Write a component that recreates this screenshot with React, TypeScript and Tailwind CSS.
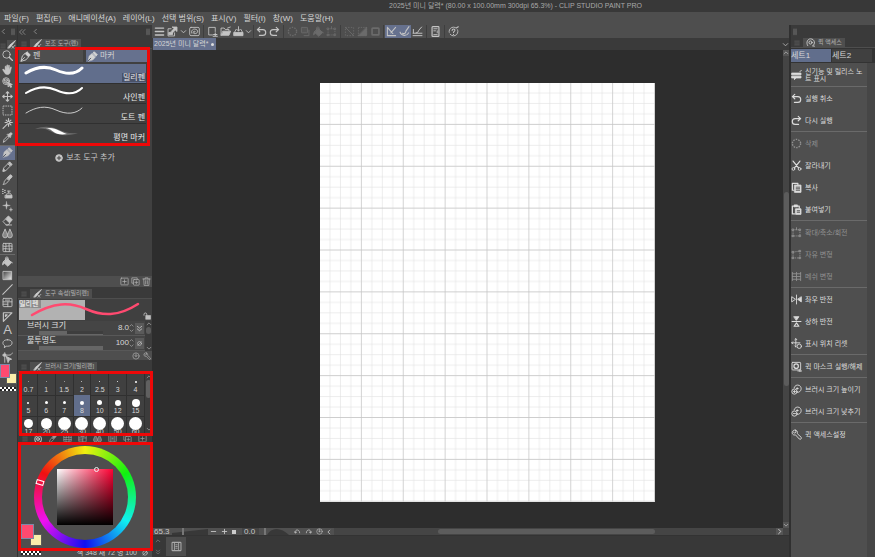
import type { ReactNode } from 'react';
import { useState } from 'react';
import clsx from 'clsx';

interface IconProps {
  children: ReactNode;
  className?: string;
}

const Icon = ({ children, className = 'size-[11px]' }: IconProps) => (
  <svg
    viewBox="0 0 16 16"
    className={clsx('shrink-0', className)}
    fill="none"
    stroke="currentColor"
    strokeWidth="1.3"
    strokeLinecap="round"
    strokeLinejoin="round"
    aria-hidden="true"
  >
    {children}
  </svg>
);

const icons = {
  zoom: <><circle cx="6.5" cy="6.5" r="5.3" /><path d="M10.5 10.5l4.8 4.8" strokeWidth="2" /></>,
  hand: <path fill="currentColor" strokeWidth=".6" d="M4.5 9V4c0-1.500 1.700-1.500 1.800 0L6.800 7V2c0-1.400 1.800-1.400 1.800 0v5l.6-4.500c.2-1.300 1.900-1.100 1.800.2L10.600 8l1.500-3.200c.5-1.200 2-.6 1.600.6L12 12.500C11.200 14.600 10 15.500 8 15.500S4.700 14.500 3.800 13L1 8.800c-.6-1.200.8-1.900 1.700-1z" />,
  operation: <><circle cx="6" cy="6" r="5" /><path d="M6 3l3 1.500v3L6 9 3 7.500v-3zM3 4.500L6 6l3-1.500M6 6v3" /><path fill="currentColor" d="M9 8l6 3-2.500.8 1.500 2.700-1.500.6-1.300-2.600L9.300 14z" /></>,
  move: <path d="M8 1v14M1 8h14M8 1L6 3.200M8 1l2 2.200M8 15l-2-2.200M8 15l2-2.200M1 8l2.200-2M1 8l2.200 2M15 8l-2.200-2M15 8l-2.200 2" strokeWidth="1.500" />,
  marquee: <rect x="1.500" y="1.500" width="13" height="13" strokeLinecap="butt" strokeDasharray="2.200 1.200" />,
  wand: <path d="M1.500 15L8 8.500M9.500 1v4M9.500 8v4M4.500 6.500h3M11 6.500h4M6 3l2 2M13 3l-2 2M13 10l-2-2" strokeWidth="1.700" />,
  pipette: <><path d="M2 14.500l1-3.500 5.500-5.500 2 2L5 13z" /><path fill="currentColor" d="M8 4l4 4 1-1-1-1 2.300-2.500c1-1.300-.8-3.300-2.200-2.200L9.800 3.700 9 3z" /></>,
  pen: <><path d="M1.500 14.500l2-7.500 4-3.500 5 5L9 12.500z" /><path d="M1.500 14.500L6.500 9.500" /><path fill="currentColor" d="M8 3.200L10.200 1 15 5.800 12.800 8z" /></>,
  marker: <><path fill="currentColor" strokeWidth=".8" d="M1.500 14.500l1.700-7.200L7 4l5 5-3.400 3.800z" /><path fill="currentColor" d="M8.500 3L10.500 1 15 5.500 13 7.500z" /><path d="M1.500 14.500l4-4" stroke="#4b5262" /></>,
  pencil: <><path d="M1.500 14.500l1-4.500 6-6 3.500 3.500-6 6z" /><path fill="currentColor" d="M9 3.200L11 1.200 14.800 5 12.800 7z" /><path fill="currentColor" d="M1.500 14.500l.8-3 2.200 2.200z" /></>,
  brush: <><path d="M2 15c1-1 1-3 1.500-4.500L7 6.500l3 3-3.500 4C5 14.800 3.500 14.500 2 15z" /><path fill="currentColor" d="M7.500 5.500L11.500 1.500C13 .5 15.500 3 14.500 4.500l-4 4z" /></>,
  airbrush: <><path fill="currentColor" d="M5 10.500h9.500v4H5z" /><path d="M6.500 10.500c0-2 1-3 2-3h2.500c1.500 0 2.500 1 2.500 3M9.800 7V4.500M8 4.500h4" /><path d="M1 2h.5M1 5h.5M4 3.500h.5M4 6.500h.5M1 8h.5" strokeWidth="1.800" /></>,
  sparkle: <><path fill="currentColor" strokeWidth=".6" d="M6.500 1l.9 4.600L12 6.500l-4.600.9L6.500 12l-.9-4.600L1 6.500l4.600-.9z" /><path fill="currentColor" strokeWidth=".5" d="M13 10l.6 2 2 .6-2 .6-.6 2-.6-2-2-.6 2-.6z" /></>,
  eraser: <><path fill="currentColor" d="M7 3.500L9.500 1.500 15 7l-4 4.500-5.500-5.500z" /><path d="M5 6L1.500 9.500l4.500 5h3l2-2.500M6 14.500h8" /></>,
  blend: <><path fill="currentColor" fillOpacity=".5" d="M4.500 2C2.500 6 1 8.500 1 10.800a3.500 3.500 0 007 0C8 8.500 6.500 6 4.500 2z" /><path fill="currentColor" fillOpacity=".5" d="M11.500 2c-2 4-3.500 6.500-3.500 8.800a3.500 3.500 0 007 0C15 8.500 13.500 6 11.500 2z" /></>,
  mesh: <><rect x="1.500" y="2" width="13" height="12" rx="1" /><path d="M5.500 2c1.500 4-1.500 8 0 12M10.500 2c-1.500 4 1.500 8 0 12M1.500 6c4 1.500 9-1.500 13 0M1.500 10c4-1.500 9 1.500 13 0" /></>,
  bucket: <><path fill="currentColor" d="M7.500 3.500L14 9.500 8.500 15 2 9z" /><path d="M5 8V3c0-2 4-2 4 0v3" /><path fill="currentColor" d="M2.500 8C1 9 .8 11 1 13c1-.5 2-2 2-4M13 8l2.500 2.500" /></>,
  gradient: <><defs><linearGradient id="toolGradient" x1="0" y1="0" x2="1" y2="1"><stop offset="0" stopColor="#444" /><stop offset="1" stopColor="#eee" /></linearGradient></defs><rect x="2" y="2" width="12" height="12" fill="url(#toolGradient)" /></>,
  line: <path d="M1 15L15 1" strokeWidth="1.500" />,
  frame: <><rect x="1.500" y="2" width="13" height="12" rx="1" /><path d="M1.500 7h13M8.500 7v7M1.500 10.500h7M5 4.500h6" /></>,
  ruler: <path d="M2 2.500h12.500L2 15z M5 5.500h2.500L5 8z" strokeWidth="1.700" />,
  balloon: <path d="M8 2.500c4 0 6.700 2 6.700 4.700S12 12 8 12c-1 0-1.500 0-2.200-.3L3.500 14.500l.2-3.600C2 10 1.300 8.800 1.300 7.200 1.300 4.500 4 2.500 8 2.500z" />,
  correct: <><path d="M4 1v14M1 4.500h9c3 0 4-1 5-3" /><path fill="currentColor" d="M6.500 6.500l7.500 4-3.200.8L9 15z" /><rect x="2.500" y="3" width="3" height="3" fill="currentColor" /></>,
  menu: <path d="M2 3h12M2 8h12M2 13h12" strokeWidth="2" />,
  clip: <><path d="M6 4H1.500v10.500H11V10" /><path fill="currentColor" d="M8 1.500h6.500V8l-2.300-2.200L8 10 6 8l4.200-4.200z" /><path fill="currentColor" d="M3 9.500h5v3H3z" /></>,
  spiral: <><rect x="1" y="2" width="14" height="12" rx="2" /><path d="M4 10.500C2.500 8 5 4.500 8 4.500s5 2 4.500 4-3 3-5 2.500-2-3 0-3.300 2 1.300 1 1.500" /></>,
  newFile: <><path d="M8 13H2.500v-11h9.500v6" /><path d="M12 10v5M9.500 12.500h5M9 15h6" strokeWidth="1.500" /></>,
  open: <><path d="M1.500 13.500V3H6l1.500 2h5.500v2" /><path fill="currentColor" d="M4.500 7.500h11l-2.500 6H2z" /><path d="M11 3l4-1.500" /></>,
  save: <><path fill="currentColor" d="M1.500 9.500h13v4.500h-13z" /><path d="M2 9.500L4.500 5M14 9.500L11.500 5M8 1v6M5.800 5L8 7.500 10.200 5" /></>,
  undo: <path d="M5.500 2L2 5.200l3.500 3.200M2 5.200h8c5.500 0 5.500 8.500 0 8.500H5" strokeWidth="1.700" />,
  redo: <path d="M10.500 2L14 5.200l-3.500 3.200M14 5.200H6C.5 5.200.5 13.700 6 13.700h5" strokeWidth="1.700" />,
  dotCircle: <circle cx="8" cy="8" r="6" strokeLinecap="butt" strokeDasharray="2.200 1.570" strokeWidth="2" />,
  copyDim: <><rect x="2" y="2" width="9" height="8" rx="1" fill="currentColor" fillOpacity=".3" /><path d="M13 6v8H6" /></>,
  transform: <><rect x="3" y="4" width="10" height="9" strokeLinecap="butt" strokeDasharray="2 1.200" /><path d="M8 1v3M2 3h2v2H2zM12 3h2v2h-2zM2 12h2v2H2zM12 12h2v2h-2z" /></>,
  deselect: <><rect x="2" y="2" width="12" height="12" strokeLinecap="butt" strokeDasharray="2 2" /><path d="M2 2l12 12" /></>,
  invert: <><rect x="2" y="2" width="12" height="12" strokeLinecap="butt" strokeDasharray="2 1.500" /><path fill="currentColor" d="M14 2v12H2z" /></>,
  border: <rect x="3" y="3" width="10" height="10" rx="1" strokeWidth="2.400" />,
  snapRuler: <path d="M2 2v12h12M2 2l8 9M7 10l7-8" strokeWidth="1.500" />,
  snapCurve: <path d="M1.500 9c2 6 10 6 12.500 1M5 10.500c3 1.500 5-.5 5-3L14.500 1" strokeWidth="1.600" />,
  snapGrid: <path d="M1.500 10.500h13M1.500 14h13M2 5v5M6 10c3 0 3-2 4-4l4-4.500" strokeWidth="1.400" />,
  phone: <><rect x="3" y="1" width="10" height="14" rx="1" strokeWidth="1.700" /><path d="M5.500 4h5M5.500 7H8M5.500 12.500h5M10.500 7v3" /></>,
  help: <><circle cx="8" cy="8" r="6.300" strokeDasharray="15 3" /><path d="M6 6.500c0-3 4.500-2.500 4 0-.3 1.300-2 1.500-2 3M8 12v.2M12.500 2.500L15 1" strokeWidth="1.500" /></>,
  down: <path d="M3 6l5 5 5-5" strokeWidth="2.200" />,
  up: <path d="M3 10l5-5 5 5" strokeWidth="2.200" />,
  left: <path d="M10 3L5 8l5 5" strokeWidth="2.200" />,
  right: <path d="M6 3l5 5-5 5" strokeWidth="2.200" />,
  double: <path d="M8 3L3 8l5 5M14 3L9 8l5 5" strokeWidth="1.800" />,
  doubleDown: <path d="M3 3l5 4 5-4M3 9l5 4 5-4" strokeWidth="1.800" />,
  grip: <path d="M6 2v12M10 2v12" strokeDasharray="1.500 1" />,
  tabBrush: <><path d="M2 14.500c2 0 4-1 5-3L15 1 5 9z" fill="currentColor" /><path d="M9 14.500l5-5M9 11l3 3.500" /></>,
  plusCircle: <><circle cx="8" cy="8" r="6.800" fill="currentColor" /><path d="M8 4.500v7M4.500 8h7" stroke="#404040" strokeWidth="2" /></>,
  addBox: <><rect x="1.500" y="2" width="13" height="12" rx="1" /><path d="M8 5v6M5 8h6" /></>,
  copyBox: <><path d="M4 11H1.500V1.500H11V4" /><rect x="4.500" y="4.500" width="10" height="10" rx="1" /><path d="M9.500 7v5M7 9.500h5" /></>,
  trash: <path d="M1.500 3.500h13M5.500 3.500V1.500h5v2M3 3.500l.8 11.500h8.400L13 3.500M6.500 6.500v6M9.500 6.500v6" />,
  lock: <><rect x="6" y="7" width="9" height="7.500" fill="currentColor" /><path d="M7.500 7V4.500c0-3.500-5.500-3.500-5.500 0V6.500" strokeWidth="1.800" /></>,
  reset: <><circle cx="8" cy="8" r="6.300" /><path d="M8 3.500v5M5.800 6.800L8 9.500l2.200-2.700" /></>,
  wrench: <path d="M6.500 1.500C3 .8.500 4.500 2.500 7.500c1 1.300 2.700 1.500 4 1l5.500 6c2 1.500 4-.8 2.800-2.500l-5.700-5.300c.7-2.700-.3-4.500-2.600-5.200L7.500 4.500 5.500 6 3.500 4.500" />,
  noCircle: <><circle cx="8" cy="8" r="4.500" /><path d="M4 12l8-8" /></>,
  access: <><path d="M3 13.500C-.5 8 3 1.500 8 1.500c8 0 9 10 3.500 12.500L15 14.500" strokeWidth="1.600" /><circle cx="8" cy="8" r="2.800" strokeWidth="1.600" /></>,
  news: <><path fill="currentColor" d="M1.500 4.500h13v2.500h-13zM1.500 9h13v2.500H7L5 14v-2.500H1.500z" /><path d="M13 2l2-1" /></>,
  cut: <><path d="M3 1.500l8 10M13 1.500l-8 10" strokeWidth="1.700" /><circle cx="3.500" cy="13" r="2" /><circle cx="12.500" cy="13" r="2" /></>,
  copy: <><path d="M4 12H2V2h8v2" strokeWidth="1.800" /><path fill="currentColor" d="M5.500 4.500h9v10.500h-9z" /><path d="M7.500 7.500h5M7.500 9.800h5M7.500 12h5" stroke="#4f4f4f" /></>,
  paste: <><path d="M5 14.500H2V3h10v3M5 1.500h4v2.500H5z" strokeWidth="1.800" /><path fill="currentColor" d="M7 7h7.500v8H7z" /><path d="M9 9.800h3.500M9 12h3.500" stroke="#4f4f4f" /></>,
  free: <><path d="M3 4.500L13 3v10H3z" strokeLinecap="butt" strokeDasharray="2 1.200" /><path d="M2 3.500h2v2H2zM12 2h2v2h-2zM2 12h2v2H2zM12 12h2v2h-2z" /></>,
  meshDim: <path d="M2 2v12M14 2v12M2 4h12M2 12h12M8 2v12M2 8h12" />,
  flipH: <><path d="M1 4.500v7L6 8z" /><path fill="currentColor" d="M15 4.500v7L10 8z" /><path d="M8 1.500v13" /></>,
  flipV: <><path fill="currentColor" d="M4.500 1h7L8 6z" /><path d="M4.500 15h7L8 10zM1.500 8h13" strokeWidth="1.600" /></>,
  resetPos: <><path d="M7 1v12M1 7h12M5.500 2.500L7 1l1.500 1.500M2.500 5.500L1 7l1.500 1.500M5.500 11.500L7 13" /><circle cx="12" cy="12" r="3.200" /></>,
  mask: <><rect x="1.500" y="2" width="12.500" height="11" rx="1" /><circle cx="7.500" cy="7.500" r="3.200" strokeWidth="1.800" /><path d="M10 14.500h5.500M13 12v4" /></>,
  sizeUp: <><path d="M4.500 5.500C5.500 2 9 .8 11.800 2c3.500 1.500 4 6.500 1 9-1.300 1-2.500 1.300-4 1.200" /><circle cx="5" cy="11" r="3.800" /><circle cx="9" cy="6.500" r="1" fill="currentColor" /><path d="M5 9.500v3M3.500 11h3" /></>,
  sizeDown: <><path d="M4.500 5.500C5.500 2 9 .8 11.800 2c3.500 1.500 4 6.500 1 9-1.300 1-2.500 1.300-4 1.200" /><circle cx="5" cy="11" r="3.800" /><circle cx="9" cy="6.500" r="1" fill="currentColor" /><path d="M3.500 11h3" /></>,
  rotateL: <path d="M3 11c-2-9 10-9 10 0M1 8.500L3 11.500l3-2" strokeWidth="1.700" />,
  rotateR: <path d="M13 11c2-9-10-9-10 0M15 8.500L13 11.500l-3-2" strokeWidth="1.700" />,
  film: <><rect x="1.500" y="2" width="13" height="12" rx="1" strokeWidth="1.500" /><path d="M5 2v12M11 2v12M7 5.500h2M7 8h2M7 10.500h2" /></>,
};

type IconName = keyof typeof icons;

const menus = ['파일(F)', '편집(E)', '애니메이션(A)', '레이어(L)', '선택 범위(S)', '표시(V)', '필터(I)', '창(W)', '도움말(H)'];

const toolGroups: { style: string; tools: (IconName | 'text')[] }[] = [
  { style: 'h-[97px] border-b pb-px', tools: ['zoom', 'hand', 'operation', 'move', 'marquee', 'wand', 'pipette'] },
  { style: 'h-[109px] border-b', tools: ['marker', 'pencil', 'brush', 'airbrush', 'sparkle', 'eraser', 'blend', 'mesh'] },
  { style: 'h-[109px]', tools: ['bucket', 'gradient', 'line', 'frame', 'ruler', 'text', 'balloon', 'correct'] },
];

const subTools = ['밀리펜', '사인펜', '도트 펜', '평면 마커'];

const brushSizes = [
  { label: '0.7', dot: 'size-px opacity-60' },
  { label: '1', dot: 'size-px opacity-60' },
  { label: '1.5', dot: 'size-px opacity-60' },
  { label: '2', dot: 'size-px opacity-80' },
  { label: '2.5', dot: 'size-px' },
  { label: '3', dot: 'size-px' },
  { label: '4', dot: 'size-[2px]' },
  { label: '5', dot: 'size-[2px]' },
  { label: '6', dot: 'size-[3px]' },
  { label: '7', dot: 'size-[3px]' },
  { label: '8', dot: 'size-[4px]' },
  { label: '10', dot: 'size-[5px]' },
  { label: '12', dot: 'size-[6px]' },
  { label: '15', dot: 'size-[8px]' },
  { label: '17', dot: 'size-[9px]' },
  { label: '20', dot: 'size-[11px]' },
  { label: '25', dot: 'size-[13px]' },
  { label: '30', dot: 'size-[13px]' },
  { label: '40', dot: 'size-[13px]' },
  { label: '50', dot: 'size-[13px]' },
  { label: '60', dot: 'size-[13px]' },
];

const quickGroups: { icon: IconName; label: string; disabled?: boolean }[][] = [
  [{ icon: 'news', label: '신기능 및 릴리스 노트 표시' }],
  [
    { icon: 'undo', label: '실행 취소' },
    { icon: 'redo', label: '다시 실행' },
  ],
  [
    { icon: 'dotCircle', label: '삭제', disabled: true },
    { icon: 'cut', label: '잘라내기' },
    { icon: 'copy', label: '복사' },
    { icon: 'paste', label: '붙여넣기' },
  ],
  [
    { icon: 'transform', label: '확대/축소/회전', disabled: true },
    { icon: 'free', label: '자유 변형', disabled: true },
    { icon: 'meshDim', label: '메쉬 변형', disabled: true },
  ],
  [
    { icon: 'flipH', label: '좌우 반전' },
    { icon: 'flipV', label: '상하 반전' },
    { icon: 'resetPos', label: '표시 위치 리셋' },
  ],
  [{ icon: 'mask', label: '퀵 마스크 실행/해제' }],
  [
    { icon: 'sizeUp', label: '브러시 크기 높이기' },
    { icon: 'sizeDown', label: '브러시 크기 낮추기' },
  ],
  [{ icon: 'wrench', label: '퀵 액세스설정' }],
];

const RedFrame = ({ className }: { className: string }) => (
  <div className={clsx('pointer-events-none absolute z-10 border-3 border-[#ee0808]', className)} />
);

const PanelTab = ({ icon, label, className }: { icon: IconName; label: string; className?: string }) => (
  <div className={clsx('flex shrink-0 items-end border-b border-[#4e4e4e] bg-[#3a3a3a] pl-[3px]', className)}>
    <Icon className="mb-px size-[6px] text-[#606060]">{icons.menu}</Icon>
    <h2 className="ml-[3px] flex h-[9px] items-center gap-[3px] bg-[#4e4e4e] px-[3px] text-[6px] leading-[9px] font-normal whitespace-nowrap text-[#b4b4b4]">
      <Icon className="size-[9px] text-[#d0d0d0]">{icons[icon]}</Icon>
      {label}
    </h2>
  </div>
);

const ToolButton = ({ name, active, dim }: { name: IconName; active?: boolean; dim?: boolean }) => (
  <button
    type="button"
    aria-label={name}
    disabled={dim}
    className={clsx('flex h-full w-[13px] shrink-0 items-center justify-center', active && 'bg-[#66718e]', dim ? 'text-[#6b6b6b]' : 'text-[#c4c4c4]')}
  >
    <Icon>{icons[name]}</Icon>
  </button>
);

const Divider = ({ narrow }: { narrow?: boolean }) => (
  <span className={clsx('h-full w-px shrink-0 bg-[#3e3e3e]', narrow ? 'mx-px' : 'mx-[2px]')} />
);

const ColorSwatches = () => (
  <div className="relative h-[20px] w-[17px] shrink-0">
    <span className="absolute right-0 bottom-0 h-[11px] w-[11px] border border-[#5b5b5b] bg-[#fbeeaa]" />
    <span className="absolute top-0 left-0 h-[14px] w-[10px] border border-[#7d89a8] bg-[#ff4a70]" />
  </div>
);

const Checker = ({ className }: { className: string }) => (
  <div className={clsx('h-[4px] shrink-0 bg-white bg-[conic-gradient(#222_25%,#fff_0_50%,#222_0_75%,#fff_0)] bg-size-[4px_4px]', className)} />
);

const ToolBar = () => (
  <aside className="flex w-[18px] shrink-0 flex-col border-r border-[#333] bg-[#4c4c4c]">
    <div className="flex h-[13px] shrink-0 items-center justify-between bg-[#3a3a3a] text-[#888]">
      <Icon className="size-[7px]">{icons.left}</Icon>
      <Icon className="size-[8px]">{icons.grip}</Icon>
    </div>
    <div className="flex h-[11px] shrink-0 items-end justify-between bg-[#3a3a3a] pr-px">
      <Icon className="size-[6px] text-[#606060]">{icons.menu}</Icon>
      <Icon className="size-[9px] bg-[#4e4e4e] text-[#d0d0d0]">{icons.tabBrush}</Icon>
    </div>
    {toolGroups.map((group) => (
      <div key={group.tools[0]} className={clsx('grid w-[15px] shrink-0 auto-rows-fr border-[#6a6a6a]', group.style)}>
        {group.tools.map((tool) => (
          <button
            key={tool}
            type="button"
            aria-label={tool}
            className={clsx('flex min-h-0 items-center justify-center text-[#c4c4c4]', tool === 'marker' && 'bg-[#66718e]')}
          >
            {tool === 'text' ? <span className="text-[13px] leading-[13px]">A</span> : <Icon>{icons[tool]}</Icon>}
          </button>
        ))}
      </div>
    ))}
    <ColorSwatches />
    <Checker className="mt-[3px] w-[16px]" />
  </aside>
);

const StrokePreview = ({ index }: { index: number }) => (
  <svg viewBox="0 0 60 12" className="h-[12px] w-[60px] shrink-0" fill="none" aria-hidden="true">
    {index === 3 ? (
      <>
        <path d="M11 5C19 2 26 2 33 5s12 5 21 4C46 12 35 12 28 8S18 4 11 5z" fill="#6a6a6a" />
        <path d="M22 4.500c5-1.500 9 0 13 2s6 3 8 3.500c-6 1-11 0-14-2.500s-4-2.500-7-3z" fill="#fff" />
      </>
    ) : (
      <path
        d="M2 9C12 3 21 1 32 6s20 4 26-2"
        stroke={index === 2 ? '#ccc' : '#fff'}
        strokeWidth={index === 0 ? 3 : index === 1 ? 2 : 1}
        strokeLinecap="round"
      />
    )}
  </svg>
);

const SubToolPanel = () => {
  const [selected, setSelected] = useState(0);

  return (
    <section className="flex min-h-0 flex-1 flex-col bg-[#404040]">
      <PanelTab icon="tabBrush" label="보조 도구(펜)" className="h-[11px]" />
      <div className="mt-px flex gap-[3px] px-px text-[8px] leading-[12px] text-[#d4d4d4]">
        <button type="button" className="flex h-[12px] w-[64px] items-center gap-[2px] bg-[#4e4e4e] pl-px">
          <Icon>{icons.pen}</Icon>펜
        </button>
        <button type="button" className="flex h-[12px] w-[62px] items-center gap-[2px] bg-[#66718e] pl-px">
          <Icon>{icons.marker}</Icon>마커
        </button>
      </div>
      <ul className="mt-[2px] mr-[6px] ml-px">
        {subTools.map((name, index) => (
          <li key={name}>
            <button
              type="button"
              onClick={() => setSelected(index)}
              className={clsx('flex h-[20px] w-full border-b border-[#303030] pl-[5px]', selected === index ? 'bg-[#616e8c]' : 'bg-[#404040]')}
            >
              <StrokePreview index={index} />
              <span className="flex-1 self-end text-right text-[8px] leading-[10px] whitespace-nowrap text-[#e8e8e8]">
                <span className={clsx('px-px', selected === index && 'bg-[#4a5268]')}>{name}</span>
              </span>
            </button>
          </li>
        ))}
      </ul>
      <button type="button" className="mt-[9px] flex items-center justify-center gap-[3px] text-[8px] leading-[10px] text-[#c8c8c8]">
        <Icon className="size-[8px]">{icons.plusCircle}</Icon>
        보조 도구 추가
      </button>
      <div className="mt-auto flex h-[11px] items-center justify-end gap-[2px] bg-[#4e4e4e] pr-px text-[#b0b0b0]">
        <button type="button" aria-label="추가"><Icon className="size-[9px]">{icons.addBox}</Icon></button>
        <button type="button" aria-label="복제"><Icon className="size-[9px]">{icons.copyBox}</Icon></button>
        <button type="button" aria-label="삭제"><Icon className="size-[9px]">{icons.trash}</Icon></button>
      </div>
    </section>
  );
};

interface PropertyRowProps {
  id: string;
  label: string;
  value: string;
  fill: string;
  icon: IconName;
}

const PropertyRow = ({ id, label, value, fill, icon }: PropertyRowProps) => (
  <div className="flex h-[15px] items-center border-b border-[#585858]">
    <div className="ml-[9px] flex w-[78px] flex-col">
      <label htmlFor={id} className="text-[8px] leading-[10px] text-[#e0e0e0]">{label}</label>
      <input
        id={id}
        type="range"
        defaultValue={value}
        className={clsx('ml-[12px] h-[4px] w-[64px] appearance-none border-b border-[#666] [&::-webkit-slider-thumb]:appearance-none', fill)}
      />
    </div>
    <input
      type="text"
      aria-label={label}
      defaultValue={value}
      className="ml-auto w-[22px] text-right text-[8px] leading-[10px] text-[#d8d8d8]"
    />
    <div className="flex flex-col text-[#aaa]">
      <Icon className="size-[5px]">{icons.up}</Icon>
      <Icon className="size-[5px]">{icons.down}</Icon>
    </div>
    <button type="button" aria-label={`${label} 설정`} className="mx-px flex h-[11px] w-[9px] items-center justify-center bg-[#5a5a5a] text-[#ccc]">
      <Icon className="size-[7px]">{icons[icon]}</Icon>
    </button>
  </div>
);

const PropertyPanel = () => (
  <section className="shrink-0">
    <PanelTab icon="tabBrush" label="도구 속성[밀리펜]" className="h-[12px]" />
    <div className="relative flex h-[22px] items-end bg-[#404040] p-px">
      <div className="h-full w-1/2 bg-[#b2b2b2]">
        <span className="block w-[22px] bg-[#8c8c8c] text-[7px] leading-[8px] whitespace-nowrap text-white">밀리펜</span>
      </div>
      <Icon className="ml-auto size-[8px] text-[#c0c0c0]">{icons.lock}</Icon>
      <svg viewBox="0 0 134 22" className="absolute inset-0 h-full w-full" fill="none" aria-hidden="true">
        <path d="M14 16C36 3 52 3 68 10s32 8 52-5" stroke="#ff4a70" strokeWidth="2.500" strokeLinecap="round" />
      </svg>
    </div>
    <div className="flex h-[30px] bg-[#454545]">
      <div className="min-w-0 flex-1">
        <PropertyRow id="brush-size" label="브러시 크기" value="8.0" fill="bg-[linear-gradient(90deg,#666_43%,#3e3e3e_0)]" icon="doubleDown" />
        <PropertyRow id="opacity" label="불투명도" value="100" fill="bg-[#666]" icon="noCircle" />
      </div>
      <div className="flex w-[7px] flex-col items-center justify-between bg-[#3c3c3c] text-[#999]">
        <Icon className="size-[6px]">{icons.up}</Icon>
        <span className="mb-auto h-[7px] w-[5px] rounded-full bg-[#5c5c5c]" />
        <Icon className="size-[6px]">{icons.down}</Icon>
      </div>
    </div>
    <div className="flex h-[9px] items-center justify-end gap-[3px] bg-[#4e4e4e] pr-px text-[#b0b0b0]">
      <button type="button" aria-label="초기화"><Icon className="size-[8px]">{icons.reset}</Icon></button>
      <button type="button" aria-label="세부 설정"><Icon className="size-[8px]">{icons.wrench}</Icon></button>
    </div>
  </section>
);

const BrushSizePanel = () => {
  const [size, setSize] = useState('8');

  return (
    <section className="shrink-0">
      <PanelTab icon="tabBrush" label="브러시 크기[밀리펜]" className="h-[12px]" />
      <div className="relative flex h-[63px] bg-[#404040] pt-[2px] pl-[2px]">
        <div className="grid flex-1 grid-cols-7 grid-rows-[21px_21px_19px]">
          {brushSizes.map((brush) => (
            <button
              key={brush.label}
              type="button"
              onClick={() => setSize(brush.label)}
              className={clsx(
                'flex min-h-0 flex-col items-center border-r border-[#303030] text-[7px] leading-[7px] text-[#d8d8d8] shadow-[0_1px_#303030]',
                size === brush.label && 'bg-[#616e8c]',
              )}
            >
              <span className="flex h-[12px] shrink-0 items-center justify-center pt-[3px]">
                <span className={clsx('rounded-full bg-white', brush.dot)} />
              </span>
              {brush.label}
            </button>
          ))}
        </div>
        <div className="mb-[3px] flex w-[7px] flex-col items-center justify-between bg-[#3c3c3c] text-[#999]">
          <Icon className="size-[6px]">{icons.up}</Icon>
          <span className="mb-auto h-[18px] w-[5px] rounded-full bg-[#606060]" />
          <Icon className="size-[6px]">{icons.down}</Icon>
        </div>
        <RedFrame className="-top-px -right-px -bottom-px left-px" />
      </div>
    </section>
  );
};

const ColorPanel = () => (
  <section className="shrink-0">
    <div className="flex h-[7px] items-center gap-[6px] overflow-hidden bg-[#3a3a3a] pl-[4px] text-[#999]">
      <Icon className="size-[6px] text-[#606060]">{icons.menu}</Icon>
      <Icon className="size-[8px] bg-[#4e4e4e] text-[#ddd]">{icons.access}</Icon>
      {(['brush', 'mesh', 'frame', 'blend', 'film', 'copyBox', 'addBox'] as IconName[]).map((name) => (
        <Icon key={name} className="size-[9px]">{icons[name]}</Icon>
      ))}
    </div>
    <div className="relative flex h-[115px] flex-col bg-[#4e4e4e]">
      <div className="relative mt-[4px] ml-[16px] flex size-[102px] shrink-0 items-center justify-center rounded-full bg-[conic-gradient(#f0f010,#10f010,#10f0f0,#1010f0,#f010f0,#f01010,#f0f010)]">
        <div className="flex size-[86px] items-center justify-center rounded-full bg-[#4e4e4e]">
          <div className="relative size-[56px] bg-[linear-gradient(to_top,#000,transparent),linear-gradient(to_right,#fff,#ff0033)]">
            <span className="absolute -top-[2px] left-[37px] size-[5px] rounded-full border border-[#eee]" />
          </div>
        </div>
        <span className="absolute top-[34px] left-[2px] h-[5px] w-[8px] rotate-[18deg] border border-white" />
      </div>
      <div className="absolute bottom-[11px] left-[3px] h-[22px] w-[21px]">
        <span className="absolute right-0 bottom-0 size-[12px] border border-[#5b5b5b] bg-[#fbeeaa]" />
        <span className="absolute top-0 left-0 h-[15px] w-[13px] border border-[#7d89a8] bg-[#ff4a70]" />
      </div>
      <div className="mt-auto flex h-[9px] items-center pr-[3px] pl-[3px] text-[7px] leading-[9px] whitespace-nowrap text-[#ccc]">
        <Checker className="w-[20px]" />
        <span className="ml-auto">색 348 채 72 명 100</span>
        <Icon className="ml-[4px] size-[8px]">{icons.noCircle}</Icon>
      </div>
      <RedFrame className="top-0 -right-px bottom-[6px] left-0" />
    </div>
  </section>
);

const LeftPanels = () => (
  <aside className="relative flex w-[134px] shrink-0 flex-col">
    <div className="flex h-[13px] shrink-0 items-center bg-[#3a3a3a] text-[#888]">
      <Icon className="size-[8px]">{icons.double}</Icon>
      <Icon className="ml-[6px] size-[7px]">{icons.left}</Icon>
      <Icon className="ml-auto size-[8px]">{icons.grip}</Icon>
    </div>
    <SubToolPanel />
    <PropertyPanel />
    <BrushSizePanel />
    <ColorPanel />
    <RedFrame className="top-[22px] right-[2px] -left-[3px] h-[99px]" />
  </aside>
);

const CommandBar = () => (
  <div className="flex h-[13px] shrink-0 items-center overflow-hidden bg-[#4e4e4e] pl-px">
    <ToolButton name="menu" />
    <ToolButton name="clip" />
    <Icon className="mx-px size-[7px] text-[#bbb]">{icons.down}</Icon>
    <ToolButton name="spiral" />
    <Divider />
    <ToolButton name="newFile" />
    <ToolButton name="open" />
    <ToolButton name="save" />
    <Icon className="size-[7px] text-[#bbb]">{icons.down}</Icon>
    <Divider narrow />
    <ToolButton name="undo" />
    <ToolButton name="redo" />
    <Divider />
    <ToolButton name="dotCircle" dim />
    <ToolButton name="copyDim" dim />
    <ToolButton name="bucket" dim />
    <ToolButton name="transform" dim />
    <Divider />
    <ToolButton name="deselect" dim />
    <ToolButton name="invert" dim />
    <ToolButton name="border" dim />
    <Divider narrow />
    <ToolButton name="snapRuler" active />
    <ToolButton name="snapCurve" active />
    <ToolButton name="snapGrid" />
    <Divider />
    <ToolButton name="phone" />
    <Divider />
    <ToolButton name="help" />
  </div>
);

const Paper = () => (
  <svg viewBox="0 0 320 400" className="aspect-[4/5] w-[335px] shrink-0 self-start bg-white" aria-label="2025년 미니 달력">
    <defs>
      <pattern id="minor" width="10" height="10" patternUnits="userSpaceOnUse">
        <path d="M10 0V10H0" fill="none" stroke="#dcdcdc" strokeWidth="1" />
      </pattern>
      <pattern id="major" width="40" height="40" patternUnits="userSpaceOnUse">
        <rect width="40" height="40" fill="url(#minor)" />
        <path d="M40 0V40H0" fill="none" stroke="#c4c4c4" strokeWidth="1.200" />
      </pattern>
    </defs>
    <rect width="320" height="400" fill="url(#major)" />
  </svg>
);

const StatusBar = () => (
  <div className="flex h-[7px] shrink-0 items-center bg-[#454545] text-[8px] leading-[7px] text-[#c8c8c8]">
    <div className="flex h-full w-[182px] shrink-0 items-center bg-[#505050] pl-[2px]">
      <span className="w-[18px]">65.3</span>
      <svg viewBox="0 0 36 7" className="h-[7px] w-[36px]" aria-hidden="true">
        <path d="M0 5L36 1v6H0z" fill="#383838" />
        <path d="M10 0h2v7h-2z" fill="#777" />
      </svg>
      <Icon className="ml-[2px] size-[7px]"><path d="M3 8h10" strokeWidth="2" /></Icon>
      <Icon className="ml-[4px] size-[7px]"><path d="M3 8h10M8 3v10" strokeWidth="2" /></Icon>
      <span className="ml-[4px] size-[4px] bg-[#ccc]" />
      <span className="ml-[6px] w-[17px] bg-[#444] pl-[2px]">0.0</span>
      <svg viewBox="0 0 32 7" className="h-[7px] w-[32px]" aria-hidden="true">
        <path d="M8 7C12-1 22-1 30 7z" fill="#383838" />
        <path d="M5 0h2v7H5z" fill="#777" />
      </svg>
      <Icon className="ml-[3px] size-[7px]">{icons.rotateL}</Icon>
      <Icon className="ml-[4px] size-[7px]">{icons.rotateR}</Icon>
      <Icon className="ml-[4px] size-[7px]">{icons.reset}</Icon>
      <Icon className="ml-[3px] size-[6px]">{icons.left}</Icon>
    </div>
    <div className="flex h-full flex-1 items-center pr-[6px]">
      <span className="mr-[27%] ml-auto h-[5px] w-[217px] rounded-full bg-[#5c5c5c]" />
      <Icon className="size-[7px] bg-[#555]">{icons.right}</Icon>
    </div>
  </div>
);

const Workspace = () => (
  <main className="flex min-w-0 flex-1 flex-col bg-[#383838]">
    <CommandBar />
    <div className="flex h-[12px] shrink-0 items-center justify-between bg-[#3a3a3a] pl-px">
      <div className="flex h-full items-center gap-[3px] bg-[#66718e] px-px text-[7px] leading-[12px] whitespace-nowrap text-[#d4d4d4]">
        2025년 미니 달력*
        <span className="mr-px size-[3px] rounded-full bg-[#ddd]" />
      </div>
      <Icon className="size-[7px] text-[#aaa]">{icons.down}</Icon>
    </div>
    <div className="flex min-h-0 flex-1 bg-[#2d2d2d]">
      <div className="flex min-w-0 flex-1 justify-center overflow-hidden pt-[33px] pl-[39px]">
        <Paper />
      </div>
      <div className="flex w-[6px] flex-col items-center bg-[#444] text-[#aaa]">
        <Icon className="size-[6px] bg-[#555]">{icons.up}</Icon>
        <span className="mt-[136px] h-[194px] w-[5px] rounded-full bg-[#5c5c5c]" />
        <Icon className="mt-auto size-[6px] bg-[#555]">{icons.down}</Icon>
      </div>
    </div>
    <StatusBar />
    <div className="flex h-[22px] shrink-0 items-center border-t border-[#333]">
      <div className="flex h-full flex-col justify-between px-[3px] py-[2px] text-[#777]">
        <Icon className="size-[6px]">{icons.up}</Icon>
        <Icon className="size-[6px]">{icons.doubleDown}</Icon>
      </div>
      <button type="button" aria-label="타임라인" className="ml-[2px] flex h-[19px] w-[20px] items-center justify-center bg-[#4e4e4e] text-[#aaa]">
        <Icon className="size-[11px]">{icons.film}</Icon>
      </button>
    </div>
  </main>
);

const QuickAccess = () => (
  <aside className="flex w-[86px] shrink-0 flex-col border-l-2 border-[#303030] bg-[#464646]">
    <div className="flex h-[13px] shrink-0 items-center bg-[#3a3a3a] text-[#888]">
      <Icon className="size-[8px]">{icons.grip}</Icon>
    </div>
    <PanelTab icon="access" label="퀵 액세스" className="h-[10px]" />
    <div className="flex h-[15px] shrink-0 gap-px bg-[#333] py-px pr-[3px] text-[8px] leading-[12px] text-[#d8d8d8]">
      <button type="button" className="flex-1 bg-[#616e8c] text-left">세트1</button>
      <button type="button" className="flex-1 bg-[#404040] text-left">세트2</button>
    </div>
    <div className="mr-[8px] flex-1 divide-y divide-[#6a6a6a] bg-[#4f4f4f] pt-px">
      {quickGroups.map((group) => (
        <div key={group[0].label}>
          {group.map((item) => (
            <button
              key={item.label}
              type="button"
              disabled={item.disabled}
              className={clsx('flex h-[22px] w-full items-center gap-[3px] text-left text-[7px] leading-[7px]', item.disabled ? 'text-[#909090]' : 'text-[#dcdcdc]')}
            >
              <Icon>{icons[item.icon]}</Icon>
              <span className="min-w-0 flex-1 break-all">{item.label}</span>
            </button>
          ))}
        </div>
      ))}
    </div>
  </aside>
);

const App = () => {
  return (
    <div className="flex h-screen w-full flex-col overflow-hidden bg-[#383838] font-['Liberation_Sans','Noto_Sans_CJK_KR',sans-serif]">
      <header className="shrink-0">
        <h1 className="h-[12px] bg-[#383838] pl-[156px] text-center text-[7px] leading-[12px] font-normal whitespace-nowrap text-[#a8a8a8]">
          2025년 미니 달력* (80.00 x 100.00mm 300dpi 65.3%) - CLIP STUDIO PAINT PRO
        </h1>
        <nav className="flex h-[13px] items-center gap-[7px] bg-[#4e4e4e] pl-[4px] text-[8px] leading-[13px] whitespace-nowrap text-[#d4d4d4]">
          {menus.map((menu) => (
            <button key={menu} type="button">{menu}</button>
          ))}
        </nav>
      </header>
      <div className="flex min-h-0 flex-1">
        <ToolBar />
        <LeftPanels />
        <Workspace />
        <QuickAccess />
      </div>
    </div>
  );
};

export default App;
